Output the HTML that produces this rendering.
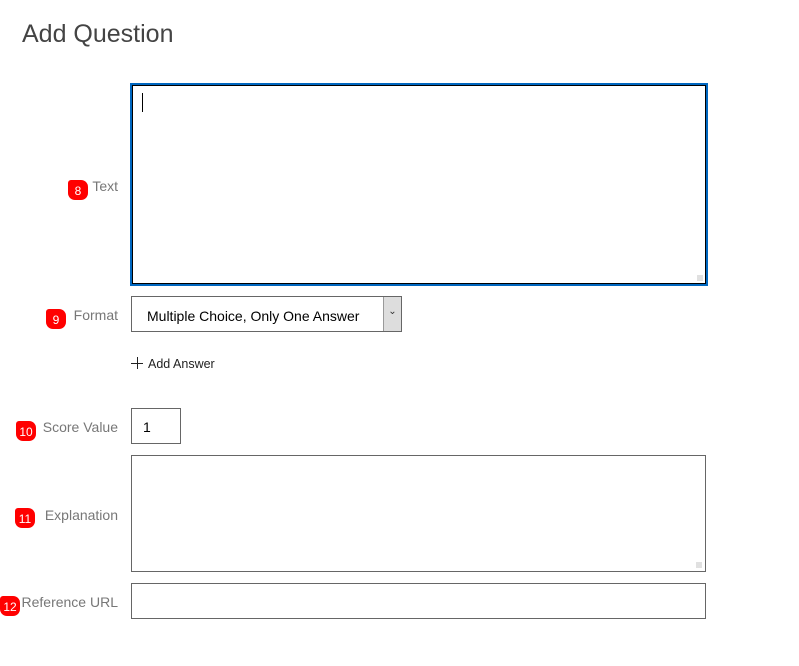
<!DOCTYPE html>
<html><head><style>
body{margin:0;width:799px;height:666px;background:#fff;font-family:"Liberation Sans",sans-serif;position:relative;overflow:hidden}
.a{position:absolute;box-sizing:border-box}
h1{position:absolute;left:22px;top:20px;margin:0;font-weight:normal;font-size:25px;color:#444}
.l{position:absolute;right:681px;font-size:14px;color:#777;white-space:nowrap}
.b{position:absolute;width:20px;height:20px;background:#f00;color:#fff;font-size:12px;text-align:center;line-height:22px;border-radius:3px 7px 7px 7px}
.box{border:1px solid #666;background:#fff}
.grip{position:absolute;right:3px;bottom:3px;width:6px;height:6px;background:radial-gradient(#999 0.7px,transparent 0.8px) 0 0/2px 2px}
</style></head><body>
<h1>Add Question</h1>
<div class="a" style="left:130px;top:83px;width:578px;height:203px;border:2px solid #0067c0;"><div style="position:absolute;inset:0;border:1px solid #000"></div><div style="position:absolute;left:10px;top:8px;width:1px;height:19px;background:#000"></div><div class="grip"></div></div>
<div class="b" style="left:68px;top:180px">8</div><div class="l" style="top:178px">Text</div>
<div class="a box" style="left:131px;top:296px;width:271px;height:36px;font-size:14px;color:#000;padding:11px 0 0 15px">Multiple Choice, Only One Answer<div style="position:absolute;right:0;top:0;width:17px;height:34px;background:#ddd;border-left:1px solid #999;text-align:center;font-size:10px;line-height:30px;color:#333">&#8964;</div></div>
<div class="b" style="left:46px;top:309px">9</div><div class="l" style="top:307px">Format</div>
<div class="a" style="left:131px;top:356px;width:12px;height:1px;background:#222;top:363px"></div>
<div class="a" style="left:137px;top:357px;width:1px;height:12px;background:#222"></div>
<div class="a" style="left:148px;top:357px;font-size:12.5px;color:#222">Add Answer</div>
<div class="a box" style="left:131px;top:408px;width:50px;height:36px;font-size:14px;padding:10px 0 0 11px">1</div>
<div class="b" style="left:16px;top:421px">10</div><div class="l" style="top:419px">Score Value</div>
<div class="a box" style="left:131px;top:455px;width:575px;height:117px"><div class="grip"></div></div>
<div class="b" style="left:15px;top:508px">11</div><div class="l" style="top:507px">Explanation</div>
<div class="a box" style="left:131px;top:583px;width:575px;height:36px"></div>
<div class="b" style="left:0;top:596px">12</div><div class="l" style="top:594px">Reference URL</div>
</body></html>
